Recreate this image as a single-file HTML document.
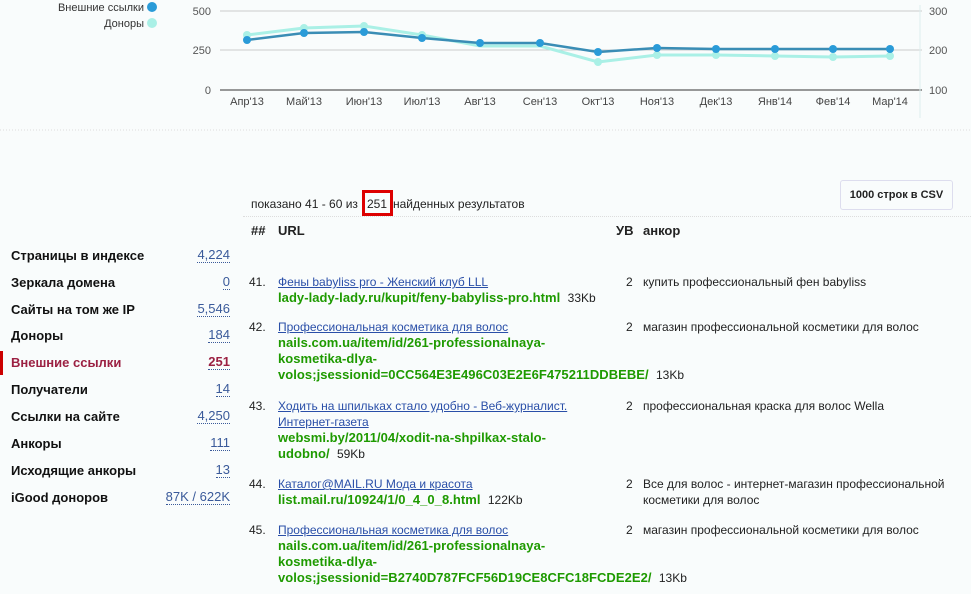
<!DOCTYPE html>
<html><head><meta charset="utf-8"><style>
body{margin:0;width:971px;height:594px;background:#f9fcfc;position:relative;overflow:hidden;font-family:"Liberation Sans","DejaVu Sans",sans-serif;font-size:12px;color:#222}
.a{position:absolute;white-space:nowrap}
.sl{position:absolute;left:11px;font-weight:bold;font-size:13px;color:#111}
.sv{position:absolute;right:741px;font-size:13px;color:#3a5a9a;border-bottom:1px dotted #3a5a9a;line-height:14px}
.n{position:absolute;left:249px;color:#222}
.l{position:absolute;left:278px;color:#2a4fa8;text-decoration:underline;white-space:nowrap}
.g{position:absolute;left:278px;color:#1e9a00;font-weight:bold;white-space:nowrap;font-size:13px;letter-spacing:0.05px;line-height:15px}
.g span{color:#222;font-weight:normal;font-size:12px;letter-spacing:0}
.u{position:absolute;left:626px}
.k{position:absolute;left:643px;white-space:nowrap}
</style></head><body>
<svg class="a" style="left:0;top:0" width="971" height="135">
<g stroke="#ddd" stroke-dasharray="1 2"><line x1="0" y1="130" x2="971" y2="130"/></g>
<line x1="220" y1="11" x2="922" y2="11" stroke="#ccc"/>
<line x1="220" y1="50" x2="922" y2="50" stroke="#ccc"/>
<line x1="220" y1="90" x2="922" y2="90" stroke="#777" stroke-width="1.5"/>
<line x1="920" y1="5" x2="920" y2="118" stroke="#ddeeee"/>
<polyline fill="none" stroke="#aaf0e6" stroke-width="3" points="247,35 304,28 364,26 422,35 480,46 540,46 598,62 657,55 716,55 775,56 833,57 890,56"/>
<g fill="#aaf0e6"><circle cx="247" cy="35" r="4"/><circle cx="304" cy="28" r="4"/><circle cx="364" cy="26" r="4"/><circle cx="422" cy="35" r="4"/><circle cx="598" cy="62" r="4"/><circle cx="657" cy="55" r="4"/><circle cx="716" cy="55" r="4"/><circle cx="775" cy="56" r="4"/><circle cx="833" cy="57" r="4"/><circle cx="890" cy="56" r="4"/></g>
<polyline fill="none" stroke="#3a8db5" stroke-width="2.5" points="247,40 304,33 364,32 422,38 480,43 540,43 598,52 657,48 716,49 775,49 833,49 890,49"/>
<g fill="#2a9bd8"><circle cx="247" cy="40" r="4"/><circle cx="304" cy="33" r="4"/><circle cx="364" cy="32" r="4"/><circle cx="422" cy="38" r="4"/><circle cx="480" cy="43" r="4"/><circle cx="540" cy="43" r="4"/><circle cx="598" cy="52" r="4"/><circle cx="657" cy="48" r="4"/><circle cx="716" cy="49" r="4"/><circle cx="775" cy="49" r="4"/><circle cx="833" cy="49" r="4"/><circle cx="890" cy="49" r="4"/></g>
<circle cx="152" cy="7" r="5" fill="#2a9bd8"/><circle cx="152" cy="23" r="5" fill="#aaf0e6"/>
<g font-family="Liberation Sans,sans-serif" font-size="11" fill="#333">
<text x="144" y="11" text-anchor="end">Внешние ссылки</text>
<text x="144" y="27" text-anchor="end">Доноры</text>
<text x="211" y="15" text-anchor="end" fill="#555">500</text>
<text x="211" y="54" text-anchor="end" fill="#555">250</text>
<text x="211" y="94" text-anchor="end" fill="#555">0</text>
<text x="929" y="15" fill="#555">300</text>
<text x="929" y="54" fill="#555">200</text>
<text x="929" y="94" fill="#555">100</text>
<g text-anchor="middle" fill="#444">
<text x="247" y="105">Апр'13</text><text x="304" y="105">Май'13</text><text x="364" y="105">Июн'13</text><text x="422" y="105">Июл'13</text><text x="480" y="105">Авг'13</text><text x="540" y="105">Сен'13</text><text x="598" y="105">Окт'13</text><text x="657" y="105">Ноя'13</text><text x="716" y="105">Дек'13</text><text x="775" y="105">Янв'14</text><text x="833" y="105">Фев'14</text><text x="890" y="105">Мар'14</text>
</g></g></svg>

<div class="sl" style="top:248px">Страницы в индексе</div><div class="sv" style="top:248px">4,224</div>
<div class="sl" style="top:275px">Зеркала домена</div><div class="sv" style="top:275px">0</div>
<div class="sl" style="top:302px">Сайты на том же IP</div><div class="sv" style="top:302px">5,546</div>
<div class="sl" style="top:328px">Доноры</div><div class="sv" style="top:328px">184</div>
<div class="a" style="left:0;top:351px;width:3px;height:24px;background:#c00"></div>
<div class="sl" style="top:355px;color:#9b2042">Внешние ссылки</div><div class="sv" style="top:355px;color:#9b2042;font-weight:bold">251</div>
<div class="sl" style="top:382px">Получатели</div><div class="sv" style="top:382px">14</div>
<div class="sl" style="top:409px">Ссылки на сайте</div><div class="sv" style="top:409px">4,250</div>
<div class="sl" style="top:436px">Анкоры</div><div class="sv" style="top:436px">111</div>
<div class="sl" style="top:463px">Исходящие анкоры</div><div class="sv" style="top:463px">13</div>
<div class="sl" style="top:490px">iGood доноров</div><div class="sv" style="top:490px">87K / 622K</div>

<div class="a" style="left:251px;top:197px">показано 41 - 60 из</div>
<div class="a" style="left:367px;top:197px">251</div>
<div class="a" style="left:393px;top:197px">найденных результатов</div>
<div class="a" style="left:362px;top:190px;width:25px;height:20px;border:3px solid #d00"></div>
<div class="a" style="left:840px;top:180px;width:111px;height:28px;border:1px solid #dde;border-radius:3px;font-weight:bold;font-size:11px;line-height:28px;text-align:center">1000 строк в CSV</div>
<div class="a" style="left:243px;top:216px;width:728px;border-top:1px dotted #ddd"></div>
<div class="a" style="left:251px;top:223px;font-weight:bold;font-size:13px">##</div>
<div class="a" style="left:278px;top:223px;font-weight:bold;font-size:13px">URL</div>
<div class="a" style="left:616px;top:223px;font-weight:bold;font-size:13px">УВ</div>
<div class="a" style="left:643px;top:223px;font-weight:bold;font-size:13px">анкор</div>

<div class="n" style="top:275px">41.</div><div class="l" style="top:275px">Фены babyliss pro - Женский клуб LLL</div>
<div class="g" style="top:290px">lady-lady-lady.ru/kupit/feny-babyliss-pro.html &nbsp;<span>33Kb</span></div>
<div class="u" style="top:275px">2</div><div class="k" style="top:275px">купить профессиональный фен babyliss</div>

<div class="n" style="top:320px">42.</div><div class="l" style="top:320px">Профессиональная косметика для волос</div>
<div class="g" style="top:335px">nails.com.ua/item/id/261-professionalnaya-</div>
<div class="g" style="top:351px">kosmetika-dlya-</div>
<div class="g" style="top:367px">volos;jsessionid=0CC564E3E496C03E2E6F475211DDBEBE/ &nbsp;<span>13Kb</span></div>
<div class="u" style="top:320px">2</div><div class="k" style="top:320px">магазин профессиональной косметики для волос</div>

<div class="n" style="top:399px">43.</div><div class="l" style="top:399px">Ходить на шпильках стало удобно - Веб-журналист.</div>
<div class="l" style="top:415px">Интернет-газета</div>
<div class="g" style="top:430px">websmi.by/2011/04/xodit-na-shpilkax-stalo-</div>
<div class="g" style="top:446px">udobno/ &nbsp;<span>59Kb</span></div>
<div class="u" style="top:399px">2</div><div class="k" style="top:399px">профессиональная краска для волос Wella</div>

<div class="n" style="top:477px">44.</div><div class="l" style="top:477px">Каталог@MAIL.RU Мода и красота</div>
<div class="g" style="top:492px">list.mail.ru/10924/1/0_4_0_8.html &nbsp;<span>122Kb</span></div>
<div class="u" style="top:477px">2</div><div class="k" style="top:477px">Все для волос - интернет-магазин профессиональной</div>
<div class="k" style="top:493px">косметики для волос</div>

<div class="n" style="top:523px">45.</div><div class="l" style="top:523px">Профессиональная косметика для волос</div>
<div class="g" style="top:538px">nails.com.ua/item/id/261-professionalnaya-</div>
<div class="g" style="top:554px">kosmetika-dlya-</div>
<div class="g" style="top:570px">volos;jsessionid=B2740D787FCF56D19CE8CFC18FCDE2E2/ &nbsp;<span>13Kb</span></div>
<div class="u" style="top:523px">2</div><div class="k" style="top:523px">магазин профессиональной косметики для волос</div>
</body></html>
